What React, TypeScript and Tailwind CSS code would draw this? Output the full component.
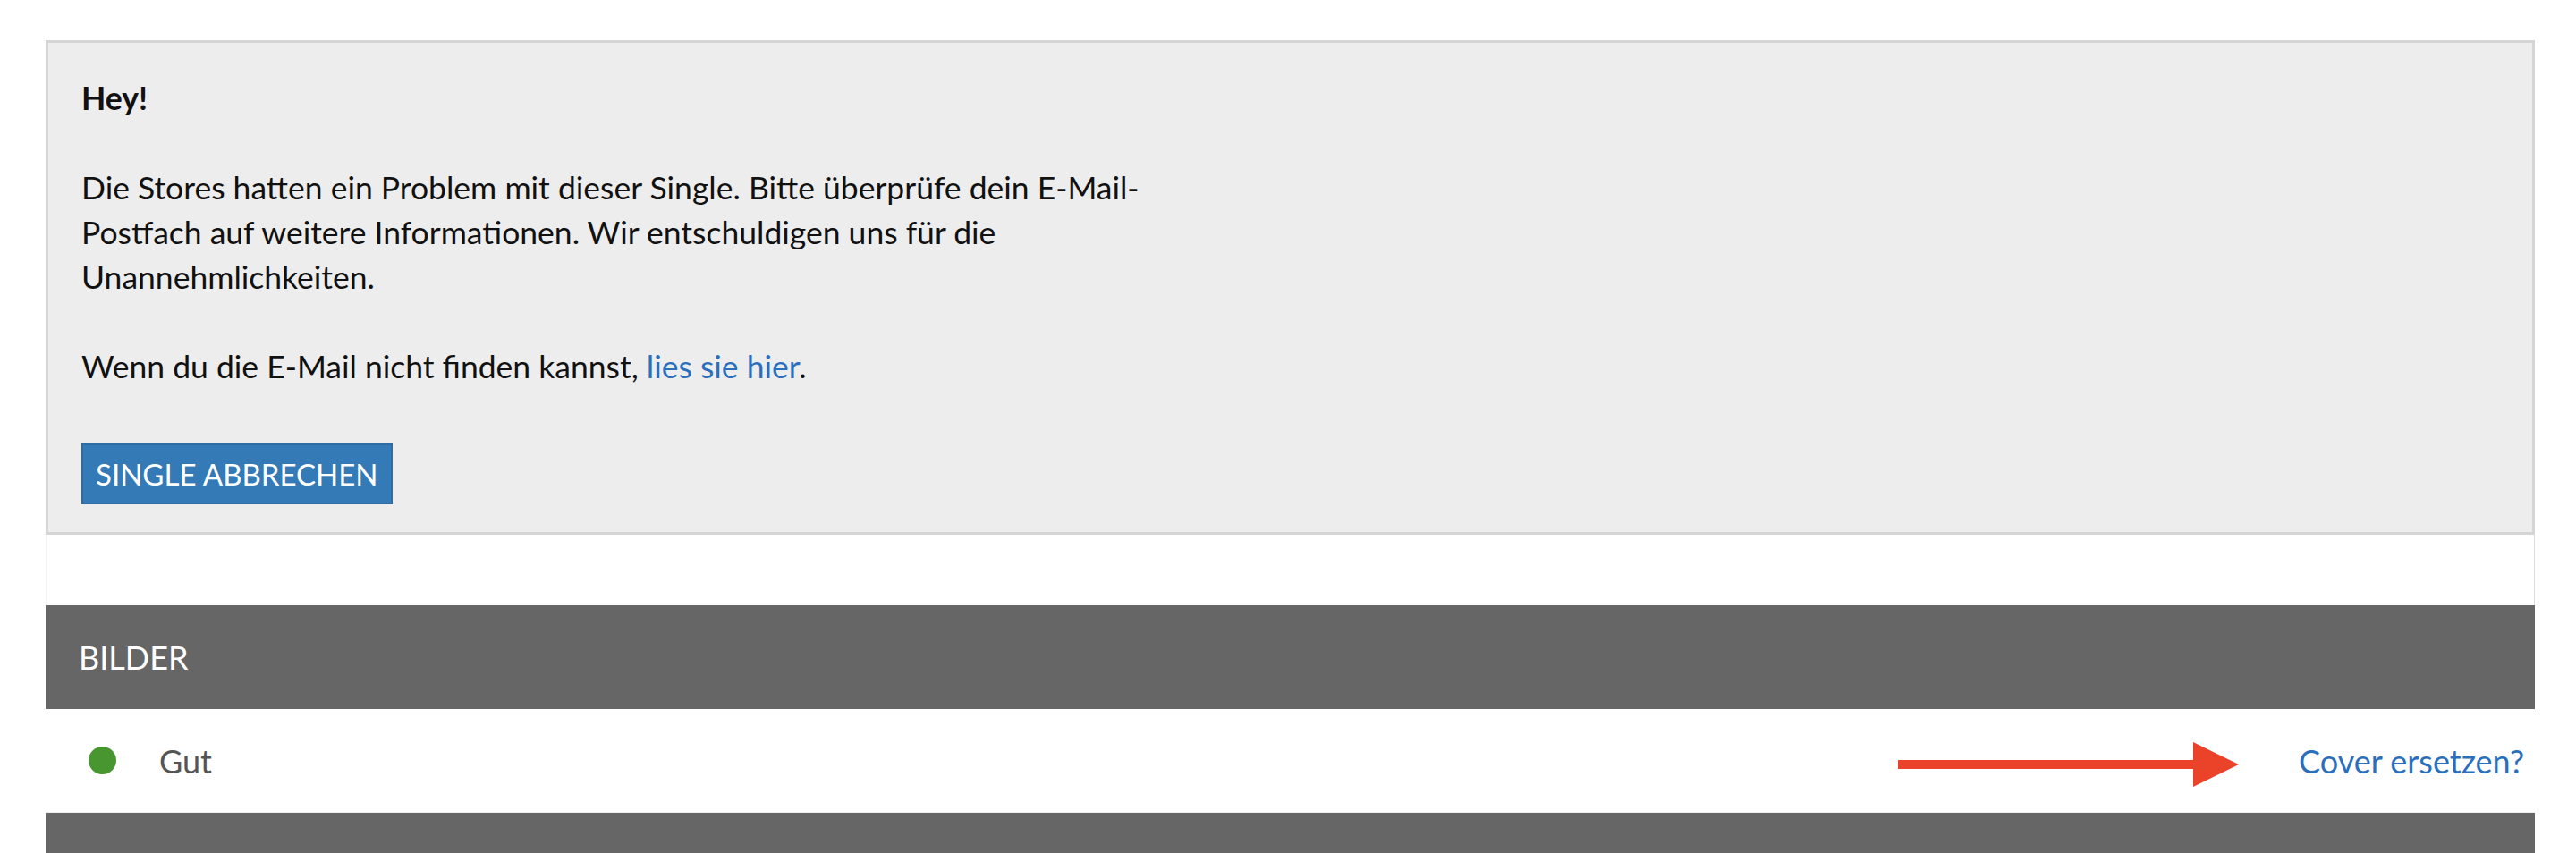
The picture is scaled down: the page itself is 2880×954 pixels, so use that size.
import React from "react";

const font = { fontFamily: "Lato, 'Open Sans', 'Liberation Sans', sans-serif" };

function RedArrow() {
  return (
    <svg width="381" height="50" viewBox="0 0 381 50" className="shrink-0 mt-[8px]">
      <rect x="0" y="20" width="331" height="10" fill="#ea4329" />
      <polygon points="330,0 381,25 330,50" fill="#ea4329" />
    </svg>
  );
}

export default function App() {
  return (
    <div className="w-full h-[954px] bg-white overflow-hidden" style={font}>
      <div className="ml-[51px] w-[2783px] pt-[45px]">
        {/* Notice box */}
        <div className="border-[3px] border-[#d5d5d5] bg-[#ededed] pl-[37px] pt-[37px] pb-[31px] text-[35.5px] leading-[50px] text-[#111]">
          <p className="font-bold">Hey!</p>
          <p className="mt-[50px] max-w-[1250px]">
            Die Stores hatten ein Problem mit dieser Single. Bitte überprüfe dein E-Mail-Postfach auf weitere Informationen. Wir entschuldigen uns für die Unannehmlichkeiten.
          </p>
          <p className="mt-[50px]">
            Wenn du die E-Mail nicht finden kannst,{" "}
            <a className="text-[#2b6fbc]">lies sie hier</a>.
          </p>
          <button className="mt-[61px] h-[68px] px-[14px] border-2 border-[#2e6da4] bg-[#337ab7] text-white text-[33px] leading-none">
            SINGLE ABBRECHEN
          </button>
        </div>

        <div className="h-[79px] border-l border-l-[#f2f2f2] border-r border-r-[#dcdcdc]" />

        {/* Section: images */}
        <div className="h-[116px] bg-[#666666] flex items-center pl-[37px] text-white text-[36px]">
          BILDER
        </div>
        <div className="h-[115px] flex items-center pl-[48px] pr-[12px]">
          <span className="w-[31px] h-[31px] rounded-full bg-[#47962f] shrink-0" />
          <span className="ml-[48px] text-[36px] text-[#555555]">Gut</span>
          <div className="flex-1" />
          <RedArrow />
          <a className="ml-[67px] text-[36px] text-[#2b6fbc]">Cover ersetzen?</a>
        </div>
        <div className="h-[60px] bg-[#666666] border-t border-t-[#eeeeee]" />
      </div>
    </div>
  );
}
